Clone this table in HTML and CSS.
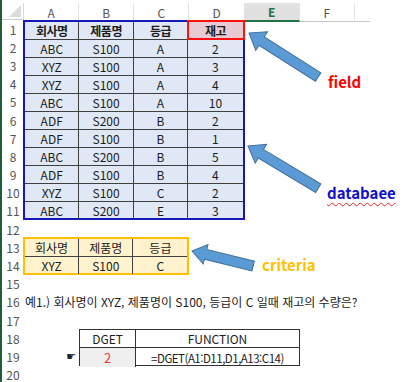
FILE: index.html
```html
<!DOCTYPE html>
<html lang="ko">
<head>
<meta charset="utf-8">
<link rel="stylesheet" href="styles.css">
</head>
<body>
<div class="sheet">
  <div class="corner"><span class="tri"></span></div>
  <div class="colheads">
    <div class="ch">A</div>
    <div class="ch">B</div>
    <div class="ch">C</div>
    <div class="ch">D</div>
    <div class="ch sel">E</div>
    <div class="ch">F</div>
    <div class="ch last"></div>
  </div>
  <div class="rowheads">
    <div>1</div><div>2</div><div>3</div><div>4</div><div>5</div>
    <div>6</div><div>7</div><div>8</div><div>9</div><div>10</div>
    <div>11</div><div>12</div><div>13</div><div>14</div><div>15</div>
    <div>16</div><div>17</div><div>18</div><div>19</div><div>20</div>
  </div>
  <div class="cells">
    <div class="db">
      <div class="c h">회사명</div><div class="c h">제품명</div><div class="c h">등급</div><div class="c h field">재고</div>
      <div class="c">ABC</div><div class="c">S100</div><div class="c">A</div><div class="c">2</div>
      <div class="c">XYZ</div><div class="c">S100</div><div class="c">A</div><div class="c">3</div>
      <div class="c">XYZ</div><div class="c">S100</div><div class="c">A</div><div class="c">4</div>
      <div class="c">ABC</div><div class="c">S100</div><div class="c">A</div><div class="c">10</div>
      <div class="c">ADF</div><div class="c">S200</div><div class="c">B</div><div class="c">2</div>
      <div class="c">ADF</div><div class="c">S100</div><div class="c">B</div><div class="c">1</div>
      <div class="c">ABC</div><div class="c">S200</div><div class="c">B</div><div class="c">5</div>
      <div class="c">ADF</div><div class="c">S100</div><div class="c">B</div><div class="c">4</div>
      <div class="c">XYZ</div><div class="c">S100</div><div class="c">C</div><div class="c">2</div>
      <div class="c">ABC</div><div class="c">S200</div><div class="c">E</div><div class="c">3</div>
    </div>
    <div class="crit">
      <div class="c">회사명</div><div class="c">제품명</div><div class="c">등급</div>
      <div class="c">XYZ</div><div class="c">S100</div><div class="c">C</div>
    </div>
    <div class="question">예1.) 회사명이 XYZ, 제품명이 S100, 등급이 C 일때 재고의 수량은?</div>
    <div class="pointer">☛</div>
    <div class="dget">
      <div class="c">DGET</div><div class="c">FUNCTION</div>
      <div class="c result">2</div><div class="c formula">=DGET(A1:D11,D1,A13:C14)</div>
    </div>
  </div>

  <svg class="arrows" width="404" height="382" viewBox="0 0 404 382" aria-hidden="true">
    <g class="arrow" transform="translate(249,33) rotate(32.5)">
      <polygon points="0,0 15,-11 15,-5 82,-5 82,5 15,5 15,11"/>
    </g>
    <g class="arrow" transform="translate(248,146) rotate(31)">
      <polygon points="0,0 15,-11 15,-5 82,-5 82,5 15,5 15,11"/>
    </g>
    <g class="arrow" transform="translate(192,251) rotate(13.8)">
      <polygon points="0,0 14,-10 14,-5 63,-5 63,5 14,5 14,10"/>
    </g>
  </svg>
  <div class="label lbl-field">field</div>
  <div class="label lbl-db">databaee</div>
  <div class="label lbl-crit">criteria</div>
</div>
</body>
</html>
```

FILE: styles.css
```css
* { box-sizing: border-box; }

html, body {
  margin: 0;
  padding: 0;
  background: #ffffff;
}

body {
  font-family: "Noto Sans CJK KR", "Noto Sans", sans-serif;
  font-size: 12px;
  color: #1c1c1c;
  width: 404px;
  height: 382px;
  overflow: hidden;
}

.sheet {
  position: relative;
  display: grid;
  grid-template-columns: 22px 1fr;
  grid-template-rows: 17px auto;
  border-left: 2px solid #1e5e3a;
  padding-top: 3px;
  height: 382px;
}

.corner {
  position: relative;
  background: #ffffff;
  border-bottom: 1px solid #c8c8c8;
  border-right: 1px solid #dadada;
}
.corner .tri {
  position: absolute;
  right: 2px;
  bottom: 2px;
  width: 0;
  height: 0;
  border-left: 12px solid transparent;
  border-bottom: 12px solid #dcdcdc;
}

.colheads {
  display: grid;
  grid-template-columns: repeat(6, 55.17px) 15px;
}
.ch {
  display: flex;
  align-items: center;
  justify-content: center;
  color: #555;
  font-size: 12px;
  border-right: 1px solid #e2e2e2;
  border-bottom: 1px solid #c8c8c8;
  background: #ffffff;
}
.ch.sel {
  background: #e1e1e1;
  color: #217346;
  font-weight: bold;
  border-bottom: 2px solid #217346;
}
.ch.last {
  border-right: none;
}

.rowheads {
  display: grid;
  grid-template-rows: repeat(20, 18.2px);
}
.rowheads div {
  display: flex;
  align-items: center;
  justify-content: center;
  color: #555;
  font-size: 12px;
}

.cells {
  display: grid;
  grid-template-columns: repeat(6, 55.17px) 1fr;
  grid-template-rows: repeat(20, 18.2px);
}

.c {
  display: flex;
  align-items: center;
  justify-content: center;
  white-space: nowrap;
  font-size: 12px;
}

/* database table */
.db {
  grid-area: 1 / 1 / 12 / 5;
  margin: 0 0 0 -1px;
  display: grid;
  grid-template-columns: repeat(4, 1fr);
  grid-template-rows: repeat(11, 1fr);
  background: #dfe8f4;
  border: 2px solid #1818b4;
}
.db .c {
  border-right: 1px solid #404040;
  border-bottom: 1px solid #404040;
}
.db .c:nth-child(4n) { border-right: none; }
.db .c:nth-last-child(-n+4) { border-bottom: none; }
.db .h { font-weight: bold; letter-spacing: -0.5px; }
.db .field {
  position: relative;
  background: #e8cbd2;
}
.db .field::after {
  content: "";
  position: absolute;
  top: -2px;
  right: -2px;
  bottom: -1px;
  left: -1px;
  border: 2px solid #ff1010;
}

/* criteria table */
.crit {
  grid-area: 13 / 1 / 15 / 4;
  margin: -1px 0 0 -1px;
  display: grid;
  grid-template-columns: repeat(3, 1fr);
  grid-template-rows: repeat(2, 1fr);
  background: #fff2cc;
  border: 2px solid #ffc000;
}
.crit .c {
  border-right: 1px solid #404040;
  border-bottom: 1px solid #404040;
}
.crit .c:nth-child(3n) { border-right: none; }
.crit .c:nth-last-child(-n+3) { border-bottom: none; }

.question {
  grid-area: 16 / 1 / 17 / -1;
  display: flex;
  align-items: center;
  padding-left: 1px;
  white-space: nowrap;
  font-size: 12px;
}

.pointer {
  grid-area: 19 / 1 / 20 / 2;
  display: flex;
  align-items: center;
  justify-content: flex-end;
  padding-right: 3px;
  font-family: "DejaVu Sans", sans-serif;
  font-size: 11px;
  color: #222;
}

.dget {
  grid-area: 18 / 2 / 20 / 6;
  display: grid;
  grid-template-columns: 56px 1fr;
  grid-template-rows: repeat(2, 1fr);
  border: 1px solid #333;
  background: #ffffff;
}
.dget .c {
  border-right: 1px solid #333;
  border-bottom: 1px solid #333;
}
.dget .c:nth-child(2n) { border-right: none; }
.dget .c:nth-last-child(-n+2) { border-bottom: none; }
.dget .result {
  background: #efefef;
  color: #f03a3a;
  font-size: 13px;
}
.dget .formula {
  font-size: 11.5px;
  letter-spacing: -0.5px;
}

/* overlays */
.arrows {
  position: absolute;
  left: -2px;
  top: 0;
  pointer-events: none;
}
.arrow polygon {
  fill: #5b9bd5;
  stroke: #41719c;
  stroke-width: 1;
  stroke-linejoin: miter;
}

.label {
  position: absolute;
  font-weight: bold;
  font-size: 15px;
  line-height: 18px;
  white-space: nowrap;
}
.lbl-field {
  left: 326px;
  top: 73px;
  color: #ff0000;
}
.lbl-db {
  left: 325px;
  top: 184px;
  color: #1010c8;
  text-decoration: underline wavy #e02020;
  text-decoration-thickness: 1px;
  text-underline-offset: 3px;
  text-decoration-skip-ink: none;
}
.lbl-crit {
  left: 260px;
  top: 256px;
  color: #ffc000;
}
```
